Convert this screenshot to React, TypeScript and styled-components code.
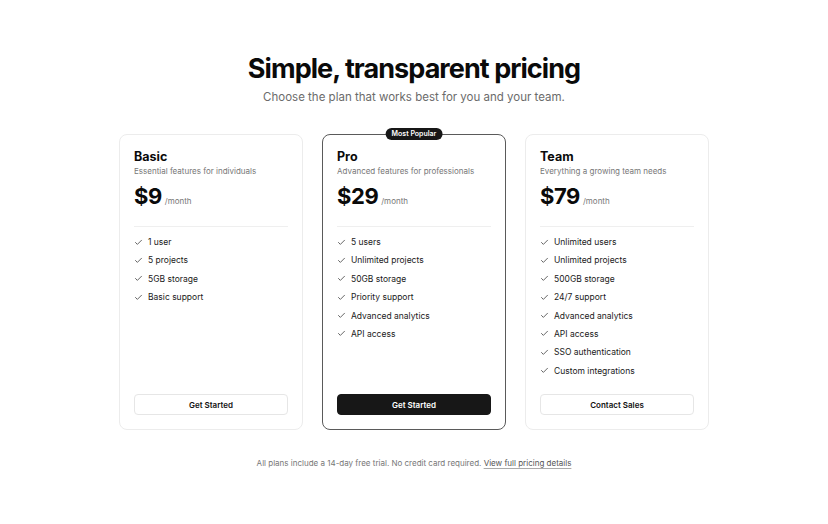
import styled, { createGlobalStyle } from "styled-components"
import { Check } from "lucide-react"

const GlobalStyle = createGlobalStyle`
  html, body {
    margin: 0;
    padding: 0;
    background: #ffffff;
    font-family: Inter, "Noto Sans", sans-serif;
    color: #111;
  }
`

const Page = styled.div`
  width: 828px;
  height: 524px;
  display: flex;
  flex-direction: column;
  align-items: center;
  padding-top: 52px;
  box-sizing: border-box;
`

const Title = styled.h1`
  margin: 0;
  font-size: 27px;
  line-height: 34px;
  font-weight: 700;
  letter-spacing: -0.035em;
  color: #0a0a0a;
`

const Subtitle = styled.p`
  margin: 3px 0 0;
  font-size: 11.5px;
  line-height: 16px;
  color: #6b6b6b;
`

const Grid = styled.div`
  margin-top: 29px;
  display: grid;
  grid-template-columns: repeat(3, 184px);
  gap: 19px;
`

const Card = styled.div<{ featured?: boolean }>`
  position: relative;
  display: flex;
  flex-direction: column;
  height: 296px;
  box-sizing: border-box;
  padding: 14px 14px 14px;
  border: 1px solid ${p => (p.featured ? "#5a5a5a" : "#ececec")};
  border-radius: 8px;
  background: #fff;
`

const Badge = styled.div`
  position: absolute;
  top: -7px;
  left: 50%;
  transform: translateX(-50%);
  background: #171717;
  color: #fff;
  font-size: 7px;
  font-weight: 600;
  line-height: 12px;
  padding: 0 6px;
  border-radius: 999px;
  white-space: nowrap;
`

const PlanName = styled.h2`
  margin: 0;
  font-size: 12.5px;
  line-height: 16px;
  font-weight: 700;
  color: #0a0a0a;
`

const PlanDesc = styled.p`
  margin: 0;
  font-size: 8px;
  line-height: 12px;
  color: #777;
`

const PriceRow = styled.div`
  display: flex;
  align-items: baseline;
  gap: 3px;
  margin-top: 5px;
`

const Price = styled.span`
  font-size: 22px;
  line-height: 28px;
  font-weight: 700;
  letter-spacing: -0.02em;
  color: #0a0a0a;
`

const Period = styled.span`
  font-size: 8px;
  color: #777;
`

const Divider = styled.hr`
  margin: 16px 0 9px;
  border: none;
  border-top: 1px solid #efefef;
`

const Features = styled.ul`
  list-style: none;
  margin: 0;
  padding: 0;
  display: flex;
  flex-direction: column;
  gap: 6.4px;
`

const Feature = styled.li`
  display: flex;
  align-items: center;
  gap: 5px;
  font-size: 8.5px;
  line-height: 12px;
  color: #1a1a1a;
`

const Button = styled.button<{ primary?: boolean }>`
  margin-top: auto;
  height: 21px;
  width: 100%;
  border-radius: 4px;
  font-family: inherit;
  font-size: 8px;
  font-weight: 600;
  cursor: pointer;
  border: 1px solid ${p => (p.primary ? "#171717" : "#e6e6e6")};
  background: ${p => (p.primary ? "#171717" : "#fff")};
  color: ${p => (p.primary ? "#fff" : "#111")};
`

const Footer = styled.p`
  margin: 28px 0 0;
  font-size: 8px;
  color: #777;
`

const FooterLink = styled.a`
  color: #555;
  text-decoration: underline;
  text-decoration-color: #aaa;
  text-underline-offset: 2px;
`

type Plan = {
  name: string
  desc: string
  price: string
  features: string[]
  cta: string
  featured?: boolean
}

const plans: Plan[] = [
  {
    name: "Basic",
    desc: "Essential features for individuals",
    price: "$9",
    features: ["1 user", "5 projects", "5GB storage", "Basic support"],
    cta: "Get Started",
  },
  {
    name: "Pro",
    desc: "Advanced features for professionals",
    price: "$29",
    features: ["5 users", "Unlimited projects", "50GB storage", "Priority support", "Advanced analytics", "API access"],
    cta: "Get Started",
    featured: true,
  },
  {
    name: "Team",
    desc: "Everything a growing team needs",
    price: "$79",
    features: [
      "Unlimited users",
      "Unlimited projects",
      "500GB storage",
      "24/7 support",
      "Advanced analytics",
      "API access",
      "SSO authentication",
      "Custom integrations",
    ],
    cta: "Contact Sales",
  },
]

export default function App() {
  return (
    <>
      <GlobalStyle />
      <Page>
        <Title>Simple, transparent pricing</Title>
        <Subtitle>Choose the plan that works best for you and your team.</Subtitle>
        <Grid>
          {plans.map(plan => (
            <Card key={plan.name} featured={plan.featured}>
              {plan.featured && <Badge>Most Popular</Badge>}
              <PlanName>{plan.name}</PlanName>
              <PlanDesc>{plan.desc}</PlanDesc>
              <PriceRow>
                <Price>{plan.price}</Price>
                <Period>/month</Period>
              </PriceRow>
              <Divider />
              <Features>
                {plan.features.map(f => (
                  <Feature key={f}>
                    <Check size={9} strokeWidth={2} color="#333" />
                    {f}
                  </Feature>
                ))}
              </Features>
              <Button primary={plan.featured}>{plan.cta}</Button>
            </Card>
          ))}
        </Grid>
        <Footer>
          All plans include a 14-day free trial. No credit card required.{" "}
          <FooterLink href="#">View full pricing details</FooterLink>
        </Footer>
      </Page>
    </>
  )
}
